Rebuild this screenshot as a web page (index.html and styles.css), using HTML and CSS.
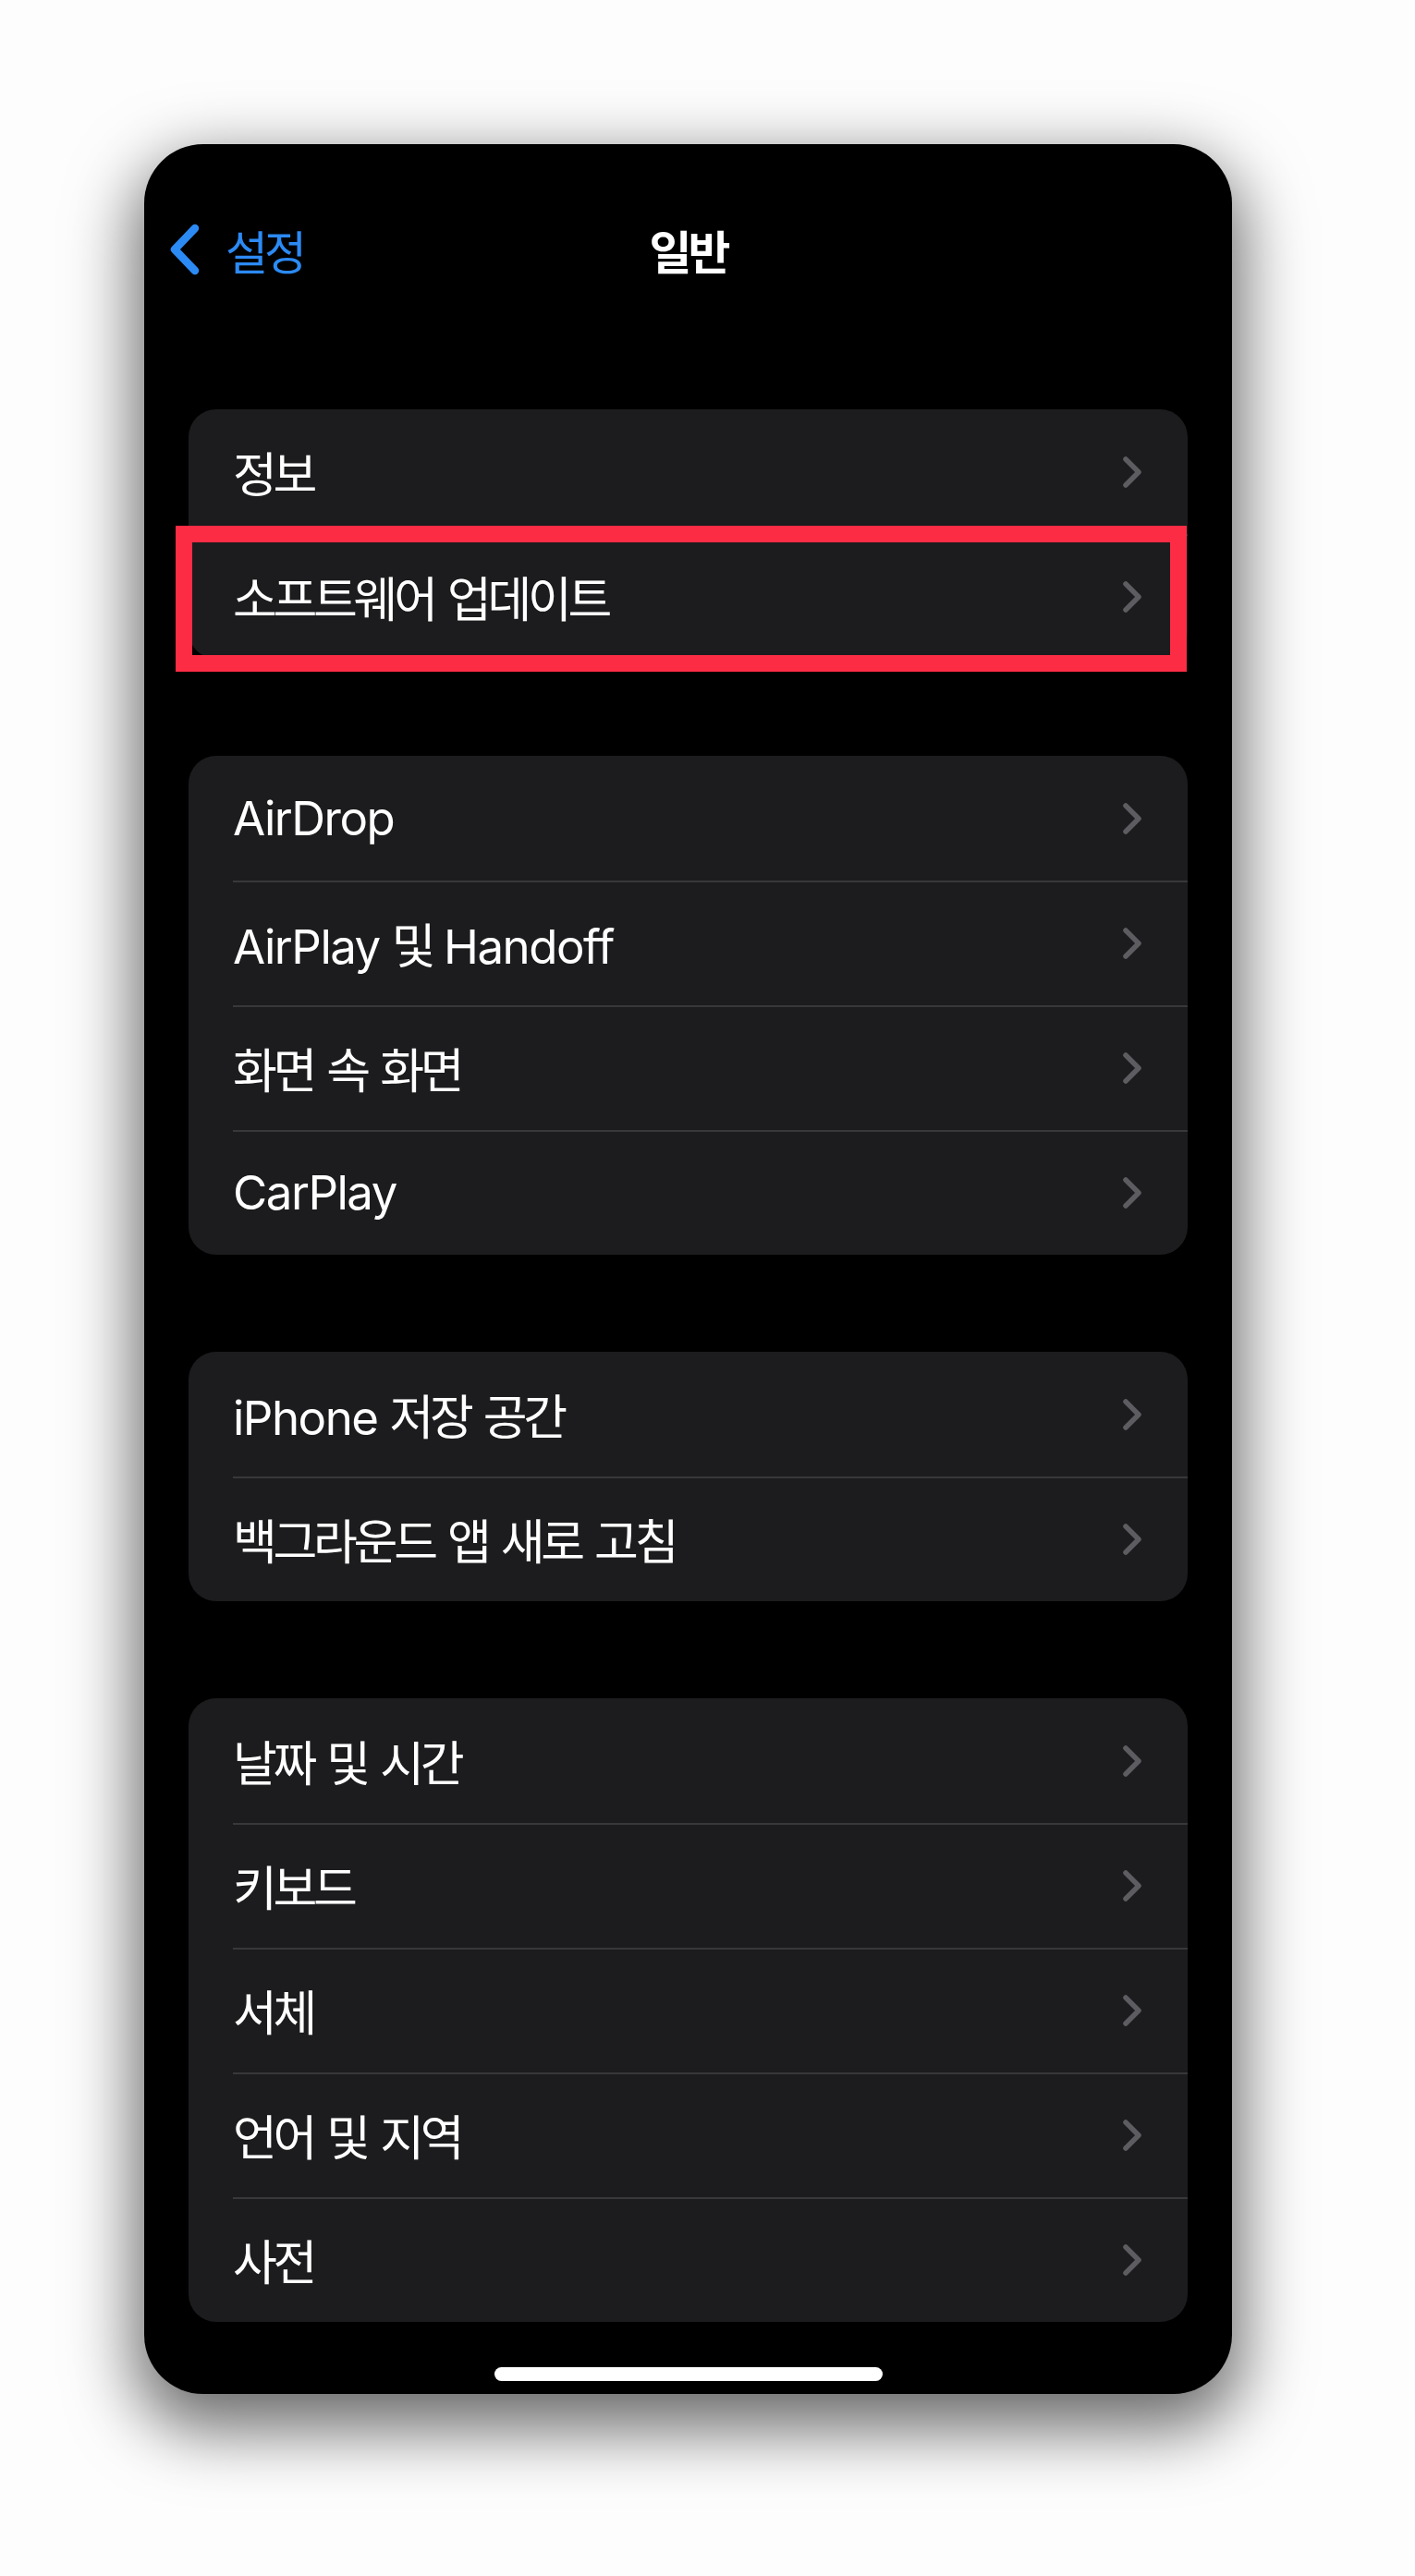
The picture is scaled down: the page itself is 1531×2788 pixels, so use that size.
FILE: index.html
```html
<!DOCTYPE html>
<html lang="ko">
<head>
  <meta charset="UTF-8">
  <title>일반</title>
  <link rel="stylesheet" href="styles.css">
</head>
<body>

  <div class="phone">
    <div class="nav">
      <div class="back">
        <svg width="34" height="56" viewBox="0 0 34 56"><path d="M28 5 L6 28 L28 51" fill="none" stroke="#2c8af4" stroke-width="8.5" stroke-linecap="round" stroke-linejoin="round"/></svg>
        <span class="ko">설정</span>
      </div>
      <div class="title ko">일반</div>
      <div></div>
    </div>

    <div class="group">
      <div class="row"><span class="label ko">정보</span><svg class="chev" width="22" height="36" viewBox="0 0 22 36"><path d="M4 4 L18 18 L4 32"/></svg></div>
      <div class="row marked"><span class="label ko">소프트웨어 업데이트</span><svg class="chev" width="22" height="36" viewBox="0 0 22 36"><path d="M4 4 L18 18 L4 32"/></svg></div>
    </div>

    <div class="group">
      <div class="row"><span class="label">AirDrop</span><svg class="chev" width="22" height="36" viewBox="0 0 22 36"><path d="M4 4 L18 18 L4 32"/></svg></div>
      <div class="row"><span class="label">AirPlay <span class="ko">및</span> Handoff</span><svg class="chev" width="22" height="36" viewBox="0 0 22 36"><path d="M4 4 L18 18 L4 32"/></svg></div>
      <div class="row"><span class="label ko">화면 속 화면</span><svg class="chev" width="22" height="36" viewBox="0 0 22 36"><path d="M4 4 L18 18 L4 32"/></svg></div>
      <div class="row"><span class="label">CarPlay</span><svg class="chev" width="22" height="36" viewBox="0 0 22 36"><path d="M4 4 L18 18 L4 32"/></svg></div>
    </div>

    <div class="group">
      <div class="row"><span class="label">iPhone <span class="ko">저장 공간</span></span><svg class="chev" width="22" height="36" viewBox="0 0 22 36"><path d="M4 4 L18 18 L4 32"/></svg></div>
      <div class="row"><span class="label ko">백그라운드 앱 새로 고침</span><svg class="chev" width="22" height="36" viewBox="0 0 22 36"><path d="M4 4 L18 18 L4 32"/></svg></div>
    </div>

    <div class="group">
      <div class="row"><span class="label ko">날짜 및 시간</span><svg class="chev" width="22" height="36" viewBox="0 0 22 36"><path d="M4 4 L18 18 L4 32"/></svg></div>
      <div class="row"><span class="label ko">키보드</span><svg class="chev" width="22" height="36" viewBox="0 0 22 36"><path d="M4 4 L18 18 L4 32"/></svg></div>
      <div class="row"><span class="label ko">서체</span><svg class="chev" width="22" height="36" viewBox="0 0 22 36"><path d="M4 4 L18 18 L4 32"/></svg></div>
      <div class="row"><span class="label ko">언어 및 지역</span><svg class="chev" width="22" height="36" viewBox="0 0 22 36"><path d="M4 4 L18 18 L4 32"/></svg></div>
      <div class="row"><span class="label ko">사전</span><svg class="chev" width="22" height="36" viewBox="0 0 22 36"><path d="M4 4 L18 18 L4 32"/></svg></div>
    </div>

    <div class="home-bar"></div>
  </div>

</body>
</html>
```

FILE: styles.css
```css
* {
  box-sizing: border-box;
}
body {
  margin: 0;
  padding: 156px 0 0 156px;
  background: #fdfdfd;
  font-family: 'Inter', 'Noto Sans CJK KR', sans-serif;
  height: 2788px;
  overflow: hidden;
}

.phone {
  width: 1177px;
  height: 2435px;
  background: #000;
  border-radius: 64px;
  box-shadow: 0 28px 72px 10px rgba(0, 0, 0, 0.58);
  display: flex;
  flex-direction: column;
  padding: 0 48px 14px;
}

.ko {
  font-family: 'Noto Sans CJK KR', sans-serif;
  letter-spacing: -4px;
}

/* top bar */
.nav {
  display: grid;
  grid-template-columns: 1fr auto 1fr;
  align-items: center;
  height: 80px;
  margin: 74px -21px 0;
}
.back {
  display: flex;
  align-items: center;
  gap: 27px;
  color: #2c8af4;
  font-size: 50px;
}
.title {
  color: #fff;
  font-size: 50px;
  font-weight: 700;
}

/* grouped list */
.group {
  background: #1c1c1e;
  border-radius: 30px;
  margin-top: 105px;
}
.nav + .group {
  margin-top: 133px;
}
.row {
  position: relative;
  height: 135px;
  display: flex;
  align-items: center;
  justify-content: space-between;
  padding: 0 49px 0 48px;
}
.row + .row::before {
  content: "";
  position: absolute;
  top: 0;
  left: 48px;
  right: 0;
  height: 2px;
  background: #38383b;
}
.label {
  color: #fff;
  font-size: 51px;
  letter-spacing: -1.5px;
}
.label.ko, .label .ko {
  font-size: 52px;
  letter-spacing: -4.3px;
  word-spacing: 4px;
}
.chev path {
  fill: none;
  stroke: #5d5d61;
  stroke-width: 5.5;
  stroke-linecap: round;
  stroke-linejoin: round;
}

/* red highlight frame */
.marked::after {
  content: "";
  position: absolute;
  top: -9px;
  bottom: -14px;
  left: -14px;
  right: 1px;
  border: 18px solid #fd2c45;
}

.home-bar {
  width: 420px;
  height: 15px;
  border-radius: 8px;
  background: #fff;
  margin: auto auto 0;
}
```
